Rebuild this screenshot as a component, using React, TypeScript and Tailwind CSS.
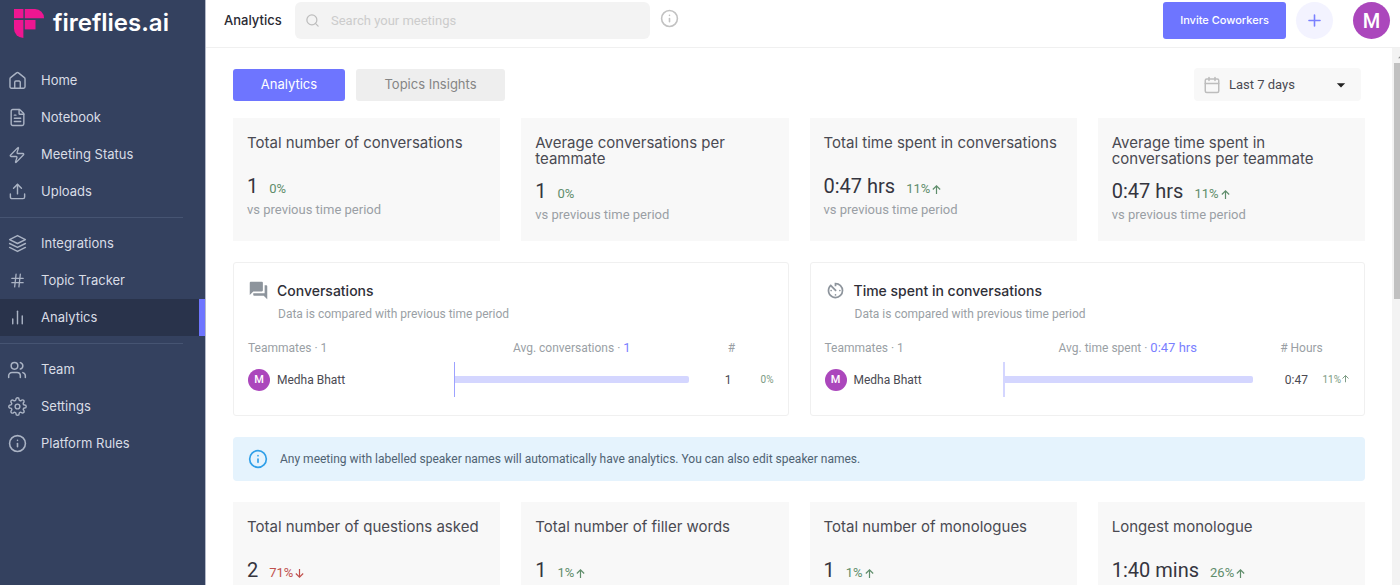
import { ReactNode } from 'react';
import {
  Calendar,
  FileText,
  Hash,
  Info,
  Plus,
  Search,
  Upload,
  Users,
  Zap
} from 'lucide-react';
import { FiBarChart2, FiLayers, FiSettings } from 'react-icons/fi';
import { MdArrowDropDown, MdArrowDropUp, MdAvTimer, MdForum } from 'react-icons/md';

type Trend = 'up' | 'down' | 'flat';

interface Stat {
  title: string;
  value: string;
  change: string;
  trend: Trend;
}

const topStats: Stat[] = [
  { title: 'Total number of conversations', value: '1', change: '0%', trend: 'flat' },
  { title: 'Average conversations per teammate', value: '1', change: '0%', trend: 'flat' },
  { title: 'Total time spent in conversations', value: '0:47 hrs', change: '11%', trend: 'up' },
  { title: 'Average time spent in conversations per teammate', value: '0:47 hrs', change: '11%', trend: 'up' }
];

const bottomStats: Stat[] = [
  { title: 'Total number of questions asked', value: '2', change: '71%', trend: 'down' },
  { title: 'Total number of filler words', value: '1', change: '1%', trend: 'up' },
  { title: 'Total number of monologues', value: '1', change: '1%', trend: 'up' },
  { title: 'Longest monologue', value: '1:40 mins', change: '26%', trend: 'up' }
];

function HomeIcon() {
  return (
    <svg viewBox="0 0 24 24" className="size-[19px]" fill="none" stroke="currentColor" strokeWidth="1.8" strokeLinecap="round" strokeLinejoin="round">
      <path d="M2.5 10v10a1.8 1.8 0 0 0 1.8 1.8h15.4a1.8 1.8 0 0 0 1.8-1.8V10a2 2 0 0 0-.8-1.6l-7.5-6a2 2 0 0 0-2.4 0l-7.5 6A2 2 0 0 0 2.5 10Z" />
      <path d="M8.5 21.5v-7.3a1.5 1.5 0 0 1 1.5-1.5h4a1.5 1.5 0 0 1 1.5 1.5v7.3" />
    </svg>
  );
}

const navGroups: { label: string; icon: ReactNode; active?: boolean }[][] = [
  [
    { label: 'Home', icon: <HomeIcon /> },
    { label: 'Notebook', icon: <FileText size={19} strokeWidth={1.8} /> },
    { label: 'Meeting Status', icon: <Zap size={18} strokeWidth={1.8} /> },
    { label: 'Uploads', icon: <Upload size={19} strokeWidth={1.8} /> }
  ],
  [
    { label: 'Integrations', icon: <FiLayers size={19} strokeWidth={1.8} /> },
    { label: 'Topic Tracker', icon: <Hash size={17} strokeWidth={1.8} /> },
    { label: 'Analytics', icon: <FiBarChart2 size={19} strokeWidth={1.8} />, active: true }
  ],
  [
    { label: 'Team', icon: <Users size={20} strokeWidth={1.8} /> },
    { label: 'Settings', icon: <FiSettings size={19} strokeWidth={1.8} /> },
    { label: 'Platform Rules', icon: <Info size={19} strokeWidth={2} /> }
  ]
];

function Logo() {
  return (
    <a href="#" className="flex items-center gap-[9px] pl-[14px] text-white">
      <svg viewBox="0 0 30 29" className="h-[29px] w-[30px]" fill="#ee1691">
        <path d="M0 0h9.4v9.2H0z" />
        <path d="M10.8 0H21a9 9 0 0 1 9 9.2H10.8z" />
        <path d="M0 11h9.4v18A9.4 9.4 0 0 1 0 19.6z" />
        <path d="M10.8 11H21.5v9.4H10.8z" />
      </svg>
      <span className="text-2xl leading-8 font-semibold">fireflies.ai</span>
    </a>
  );
}

function Sidebar() {
  return (
    <aside className="w-[206px] shrink-0 border-r border-[#b4b9c8] bg-[#34415f] pt-[7px] font-[Inter,sans-serif]">
      <Logo />
      <nav className="mt-[23px]">
        {navGroups.map((group, i) => (
          <div key={i}>
            {i > 0 && <hr className="my-[7px] mr-[22px] border-[#465472]" />}
            {group.map((item) => (
              <a
                key={item.label}
                href="#"
                className={`flex h-[37px] items-center gap-[14px] pl-[7px] text-[13px] text-[#d9dde6] ${
                  item.active ? 'border-r-[6px] border-[#6e75ff] bg-[#29334b]' : ''
                }`}
              >
                <span className="flex w-[20px] justify-center text-[#aab3c4]">{item.icon}</span>
                {item.label}
              </a>
            ))}
          </div>
        ))}
      </nav>
    </aside>
  );
}

function TopBar() {
  return (
    <header className="flex h-12 shrink-0 items-start border-b border-[#f0f0f0] pt-[2px] pr-[10px] pl-[18px] font-[Inter,sans-serif]">
      <h1 className="w-[71px] text-[13px] leading-[37px] font-medium text-[#2a2a33]">Analytics</h1>
      <div className="relative w-[355px]">
        <Search size={15} className="absolute top-[11px] left-[10px] text-[#bdbdbd]" />
        <input
          type="search"
          aria-label="Search your meetings"
          placeholder="Search your meetings"
          className="h-[37px] w-full rounded-md bg-[#f3f3f3] pl-9 font-[Roboto,sans-serif] text-[13px] placeholder:text-[#cccccc]"
        />
      </div>
      <button aria-label="Search help" className="mt-[7px] ml-[10px] text-[#c2c2c2]">
        <Info size={19} strokeWidth={2} />
      </button>
      <button className="ml-auto h-[37px] w-[123px] rounded-[3px] bg-[#6e75ff] text-[11px] font-medium text-white">
        Invite Coworkers
      </button>
      <button aria-label="Add" className="ml-[10px] flex size-[37px] items-center justify-center rounded-full bg-[#f3f3ff] text-[#7a80ff]">
        <Plus size={19} strokeWidth={2} />
      </button>
      <button className="ml-5 size-[37px] rounded-full bg-[#ab47bc] font-[Roboto,sans-serif] text-xl font-medium text-white">M</button>
    </header>
  );
}

function Arrow({ trend, className = '' }: { trend: Trend; className?: string }) {
  if (trend === 'flat') return null;
  return (
    <svg viewBox="0 0 12 12" className={`inline-block ${className}`} fill="none" stroke="currentColor" strokeWidth="1.3">
      <path d={trend === 'up' ? 'M6 11V2M2 6l4-4 4 4' : 'M6 1v9M2 6l4 4 4-4'} />
    </svg>
  );
}

function StatCard({ stat }: { stat: Stat }) {
  return (
    <section className="bg-[#f8f8f8] px-[14px] pt-[17px] pb-[18px]">
      <h2 className="mb-3 min-h-[27px] font-[Inter,sans-serif] text-[15px] leading-4 text-[#4a4a52]">{stat.title}</h2>
      <p className="flex h-6 items-baseline gap-[11px] text-xl leading-6 text-[#35353f]">
        {stat.value}
        <span className={`flex items-center gap-px text-[13px] ${stat.trend === 'down' ? 'text-[#c0504d]' : 'text-[#5f8d6b]'}`}>
          {stat.change}
          <Arrow trend={stat.trend} className="size-[11px]" />
        </span>
      </p>
      <p className="mt-1 text-[13px] leading-4 text-[#9a9fa5]">vs previous time period</p>
    </section>
  );
}

function StatRow({ stats }: { stats: Stat[] }) {
  return (
    <div className="grid grid-cols-4 gap-[21px]">
      {stats.map((stat) => (
        <StatCard key={stat.title} stat={stat} />
      ))}
    </div>
  );
}

interface PanelProps {
  icon: ReactNode;
  title: string;
  average: string;
  averageValue: string;
  unit: string;
  value: string;
  change: string;
  trend: Trend;
  nameCol: string;
  valueCol: string;
  lineClass: string;
}

function ComparePanel(props: PanelProps) {
  return (
    <section className="rounded-[3px] border border-[#f0f0f0] px-[14px] pt-[17px] pb-[18px]">
      <div className="flex h-[21px] items-center">
        <span className="w-[29px] text-[#8d949c]">{props.icon}</span>
        <h2 className="font-[Inter,sans-serif] text-sm font-medium text-[#2f2f38]">{props.title}</h2>
      </div>
      <p className="mt-[5px] ml-[30px] text-xs leading-4 text-[#9a9fa5]">Data is compared with previous time period</p>
      <table className="mt-[18px] w-full table-fixed text-left text-xs">
        <colgroup>
          <col className={props.nameCol} />
          <col />
          <col className={props.valueCol} />
          <col className="w-[42px]" />
        </colgroup>
        <thead>
          <tr className="h-[22px] align-top leading-4 text-[#9a9fa5]">
            <th className="font-normal">Teammates · 1</th>
            <th className="text-center font-normal">
              {props.average} · <span className="text-[13px] text-[#7a80ff]">{props.averageValue}</span>
            </th>
            <th colSpan={2} className="text-center font-normal">{props.unit}</th>
          </tr>
        </thead>
        <tbody>
          <tr className="h-[35px] text-[#4a4a52]">
            <td>
              <div className="flex items-center gap-[7px]">
                <span className="flex size-[22px] items-center justify-center rounded-full bg-[#ab47bc] text-[11px] leading-none font-medium text-white">M</span>
                Medha Bhatt
              </div>
            </td>
            <td>
              <div className={`flex h-[35px] items-center ${props.lineClass}`}>
                <div className="h-[7px] w-full rounded-r-[2px] bg-[#d4d6ff]" />
              </div>
            </td>
            <td className="text-right">{props.value}</td>
            <td className="text-right text-[10px] text-[#7b9a83]">
              {props.change}
              <Arrow trend={props.trend} className="size-[9px] align-baseline" />
            </td>
          </tr>
        </tbody>
      </table>
    </section>
  );
}

function Filters() {
  return (
    <div className="flex items-start font-[Inter,sans-serif] text-[13px]">
      <button className="mt-px h-8 w-28 rounded-[3px] bg-[#6e75ff] text-white">Analytics</button>
      <button className="mt-px ml-[11px] h-8 w-[149px] rounded-[3px] bg-[#eeeeee] text-[#858585]">Topics Insights</button>
      <div className="relative mr-1 ml-auto w-[167px] font-[Roboto,sans-serif]">
        <Calendar size={18} strokeWidth={2} className="absolute top-2 left-[9px] text-[#bdbdbd]" />
        <select aria-label="Time period" className="h-[33px] w-full appearance-none rounded bg-[#f8f8f8] pl-[35px] text-[13px] text-[#4a4a52]">
          <option>Last 7 days</option>
        </select>
        <MdArrowDropDown size={20} className="pointer-events-none absolute top-[7px] right-[10px] text-[#222222]" />
      </div>
    </div>
  );
}

function ScrollTrack() {
  return (
    <div className="flex w-2 shrink-0 flex-col overflow-hidden bg-[#f3f3f3] pl-[2px]">
      <div className="h-[15px] pt-[2px] text-[#8f8f8f]">
        <MdArrowDropUp size={14} />
      </div>
      <div className="h-[44%] bg-[#c1c1c1]" />
    </div>
  );
}

export default function App() {
  return (
    <div className="flex h-screen overflow-hidden bg-white font-[Roboto,sans-serif]">
      <Sidebar />
      <div className="flex min-w-0 flex-1 flex-col">
        <TopBar />
        <div className="flex min-h-0 flex-1">
          <main className="min-w-0 flex-1 overflow-hidden pt-5 pr-[27px] pl-[27px]">
            <Filters />
            <div className="mt-[17px] flex flex-col gap-[21px]">
              <StatRow stats={topStats} />
              <div className="grid grid-cols-2 gap-[21px]">
                <ComparePanel
                  icon={<MdForum size={21} />}
                  title="Conversations"
                  average="Avg. conversations"
                  averageValue="1"
                  unit="#"
                  value="1"
                  change="0%"
                  trend="flat"
                  nameCol="w-[206px]"
                  valueCol="w-[42px]"
                  lineClass="border-l border-[#9da2ff]"
                />
                <ComparePanel
                  icon={<MdAvTimer size={21} />}
                  title="Time spent in conversations"
                  average="Avg. time spent"
                  averageValue="0:47 hrs"
                  unit="# Hours"
                  value="0:47"
                  change="11%"
                  trend="up"
                  nameCol="w-[178px]"
                  valueCol="w-[55px]"
                  lineClass="border-l-2 border-[#d4d6ff]"
                />
              </div>
              <div className="flex h-11 items-center gap-3 rounded bg-[#e5f3fd] px-[15px] text-xs text-[#4f6272]">
                <Info size={20} strokeWidth={2} className="text-[#2f9fe8]" />
                Any meeting with labelled speaker names will automatically have analytics. You can also edit speaker names.
              </div>
              <StatRow stats={bottomStats} />
            </div>
          </main>
          <ScrollTrack />
        </div>
      </div>
    </div>
  );
}
